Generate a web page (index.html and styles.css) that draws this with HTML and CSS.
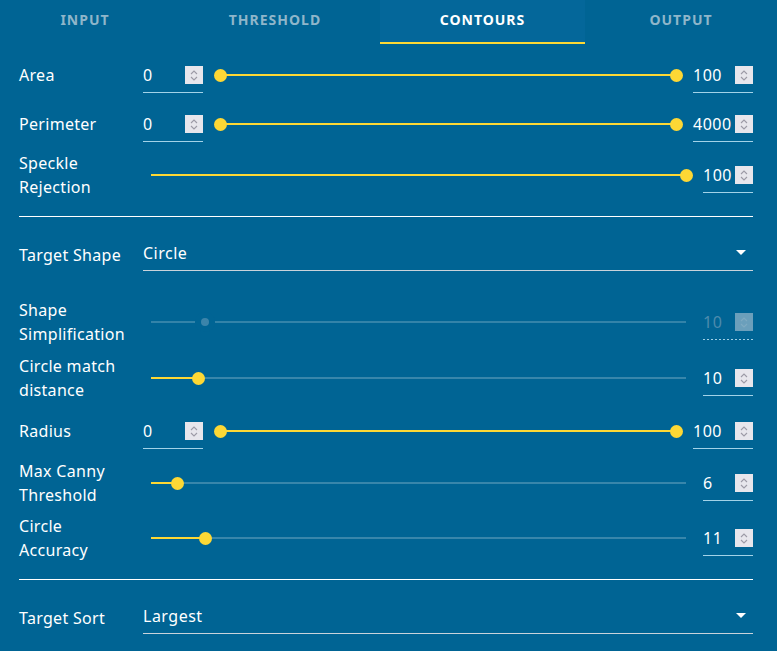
FILE: index.html
```html
<!DOCTYPE html>
<html>
<head>
<meta charset="utf-8">
<link rel="stylesheet" href="styles.css">
</head>
<body>
<div class="tabs">
  <div class="tab tab-input">INPUT</div>
  <div class="tab tab-threshold">THRESHOLD</div>
  <div class="tab tab-contours active">CONTOURS</div>
  <div class="tab tab-output">OUTPUT</div>
</div>

<div class="panel">
  <div class="row range-row h-area">
    <div class="label">Area</div>
    <div class="num"><span class="val">0</span><span class="spin"><svg viewBox="0 0 18 18"><polyline points="6,8 9,5 12,8"/><polyline points="6,11 9,14 12,11"/></svg></span></div>
    <div class="slider range">
      <div class="track"><div class="fill" style="left:0%;width:100%"></div><div class="thumb" style="left:0%"></div><div class="thumb" style="left:100%"></div></div>
    </div>
    <div class="num"><span class="val">100</span><span class="spin"><svg viewBox="0 0 18 18"><polyline points="6,8 9,5 12,8"/><polyline points="6,11 9,14 12,11"/></svg></span></div>
  </div>

  <div class="row range-row h-perim">
    <div class="label">Perimeter</div>
    <div class="num"><span class="val">0</span><span class="spin"><svg viewBox="0 0 18 18"><polyline points="6,8 9,5 12,8"/><polyline points="6,11 9,14 12,11"/></svg></span></div>
    <div class="slider range">
      <div class="track"><div class="fill" style="left:0%;width:100%"></div><div class="thumb" style="left:0%"></div><div class="thumb" style="left:100%"></div></div>
    </div>
    <div class="num"><span class="val">4000</span><span class="spin"><svg viewBox="0 0 18 18"><polyline points="6,8 9,5 12,8"/><polyline points="6,11 9,14 12,11"/></svg></span></div>
  </div>

  <div class="row single-row h-speckle">
    <div class="label">Speckle<br>Rejection</div>
    <div class="slider single">
      <div class="track"><div class="fill" style="left:0%;width:100%"></div><div class="thumb" style="left:100%"></div></div>
    </div>
    <div class="num"><span class="val">100</span><span class="spin"><svg viewBox="0 0 18 18"><polyline points="6,8 9,5 12,8"/><polyline points="6,11 9,14 12,11"/></svg></span></div>
  </div>

  <div class="divider div-1"></div>

  <div class="row select-row h-shape">
    <div class="label">Target Shape</div>
    <div class="select"><span class="val">Circle</span><span class="caret"></span></div>
  </div>

  <div class="row single-row h-simp disabled">
    <div class="label">Shape<br>Simplification</div>
    <div class="slider single">
      <div class="track"><div class="thumb" style="left:10%"></div></div>
    </div>
    <div class="num"><span class="val">10</span><span class="spin"><svg viewBox="0 0 18 18"><polyline points="6,8 9,5 12,8"/><polyline points="6,11 9,14 12,11"/></svg></span></div>
  </div>

  <div class="row single-row h-match">
    <div class="label">Circle match<br>distance</div>
    <div class="slider single">
      <div class="track"><div class="fill" style="left:0%;width:8.8%"></div><div class="thumb" style="left:8.8%"></div></div>
    </div>
    <div class="num"><span class="val">10</span><span class="spin"><svg viewBox="0 0 18 18"><polyline points="6,8 9,5 12,8"/><polyline points="6,11 9,14 12,11"/></svg></span></div>
  </div>

  <div class="row range-row h-radius">
    <div class="label">Radius</div>
    <div class="num"><span class="val">0</span><span class="spin"><svg viewBox="0 0 18 18"><polyline points="6,8 9,5 12,8"/><polyline points="6,11 9,14 12,11"/></svg></span></div>
    <div class="slider range">
      <div class="track"><div class="fill" style="left:0%;width:100%"></div><div class="thumb" style="left:0%"></div><div class="thumb" style="left:100%"></div></div>
    </div>
    <div class="num"><span class="val">100</span><span class="spin"><svg viewBox="0 0 18 18"><polyline points="6,8 9,5 12,8"/><polyline points="6,11 9,14 12,11"/></svg></span></div>
  </div>

  <div class="row single-row h-canny">
    <div class="label">Max Canny<br>Threshold</div>
    <div class="slider single">
      <div class="track"><div class="fill" style="left:0%;width:5%"></div><div class="thumb" style="left:5%"></div></div>
    </div>
    <div class="num"><span class="val">6</span><span class="spin"><svg viewBox="0 0 18 18"><polyline points="6,8 9,5 12,8"/><polyline points="6,11 9,14 12,11"/></svg></span></div>
  </div>

  <div class="row single-row h-acc">
    <div class="label">Circle<br>Accuracy</div>
    <div class="slider single">
      <div class="track"><div class="fill" style="left:0%;width:10.1%"></div><div class="thumb" style="left:10.1%"></div></div>
    </div>
    <div class="num"><span class="val">11</span><span class="spin"><svg viewBox="0 0 18 18"><polyline points="6,8 9,5 12,8"/><polyline points="6,11 9,14 12,11"/></svg></span></div>
  </div>

  <div class="divider div-2"></div>

  <div class="row select-row h-sort">
    <div class="label">Target Sort</div>
    <div class="select"><span class="val">Largest</span><span class="caret"></span></div>
  </div>
</div>
</body>
</html>
```

FILE: styles.css
```css
* { box-sizing: border-box; }
html, body {
  margin: 0;
  padding: 0;
  background: #006494;
  width: 777px;
  height: 651px;
  overflow: hidden;
  font-family: "Noto Sans", "Open Sans", sans-serif;
  color: #ffffff;
}

.tabs {
  display: flex;
  height: 44px;
}
.tab {
  display: flex;
  align-items: center;
  justify-content: center;
  font-weight: 700;
  font-size: 14px;
  letter-spacing: 1px;
  color: #8fb6ca;
  padding-bottom: 6px;
}
.tab-input { width: 170px; }
.tab-threshold { width: 210px; }
.tab-contours { width: 205px; }
.tab-output { width: 192px; }
.tab.active {
  color: #ffffff;
  background: #04679a;
  border-bottom: 2px solid #fdd835;
  padding-bottom: 4px;
}

.panel {
  padding: 0 24px 0 19px;
}

.row {
  display: grid;
  align-items: center;
}
.range-row { grid-template-columns: 124px 60px 1fr 60px; }
.single-row { grid-template-columns: 124px 1fr 50px; }
.select-row { grid-template-columns: 124px 1fr; }

.h-area { margin-top: 7px; height: 48px; }
.h-perim { height: 50px; }
.h-speckle { height: 52px; }
.h-shape { height: 74px; }
.h-simp { height: 62px; }
.h-match { height: 50px; }
.h-radius { height: 56px; }
.h-canny { height: 46px; }
.h-acc { height: 66px; }
.h-sort { height: 74px; }

.label {
  font-size: 16px;
  line-height: 24px;
  letter-spacing: 0.3px;
  color: #ffffff;
}
.select-row .label { padding-top: 2px; }

.num {
  display: flex;
  align-items: center;
  justify-content: space-between;
  height: 30px;
  margin-top: 5px;
  padding-bottom: 5px;
  border-bottom: 1px solid #a3d3e8;
}
.val {
  font-size: 16px;
  line-height: 24px;
  letter-spacing: 0.5px;
  color: #ffffff;
}
.spin {
  width: 18px;
  height: 18px;
  background: #e7e6ec;
  display: block;
  flex: none;
}
.spin svg {
  display: block;
  width: 18px;
  height: 18px;
  fill: none;
  stroke: #9c9aa6;
  stroke-width: 1.1;
}

.slider {
  height: 20px;
  display: flex;
  align-items: center;
}
.slider.range { padding: 0 17px; }
.slider.single { padding: 0 17px 0 8px; }
.track {
  position: relative;
  flex: 1;
  height: 2px;
  background: rgba(255, 255, 255, 0.22);
}
.fill {
  position: absolute;
  top: 0;
  height: 2px;
  background: #fdd835;
}
.thumb {
  position: absolute;
  top: 1px;
  width: 13px;
  height: 13px;
  margin: -6.5px 0 0 -6.5px;
  border-radius: 50%;
  background: #fdd835;
}

.disabled .track { background: rgba(255, 255, 255, 0.2); }
.disabled .thumb {
  width: 8px;
  height: 8px;
  margin: -4px 0 0 -4px;
  background: #3b84aa;
  box-shadow: 0 0 0 6px #006494;
}
.disabled .val { color: #4d8bad; }
.disabled .spin { background: #6b9fbb; }
.disabled .spin svg { stroke: #7faac2; }
.disabled .num {
  border-bottom: none;
  background: repeating-linear-gradient(to right, #9fcfe6 0 2px, transparent 2px 4px) bottom left / 100% 1px no-repeat;
}

.divider {
  height: 1px;
  background: #ffffff;
}
.div-1 { margin-top: 15px; }
.div-2 { margin-top: 8px; }

.select {
  display: flex;
  align-items: center;
  justify-content: space-between;
  height: 30px;
  margin-top: 3px;
  padding-bottom: 5px;
  border-bottom: 1px solid #c9d3db;
}
.caret {
  width: 0;
  height: 0;
  border-left: 5px solid transparent;
  border-right: 5px solid transparent;
  border-top: 5px solid #ffffff;
  margin-right: 7px;
}
```
